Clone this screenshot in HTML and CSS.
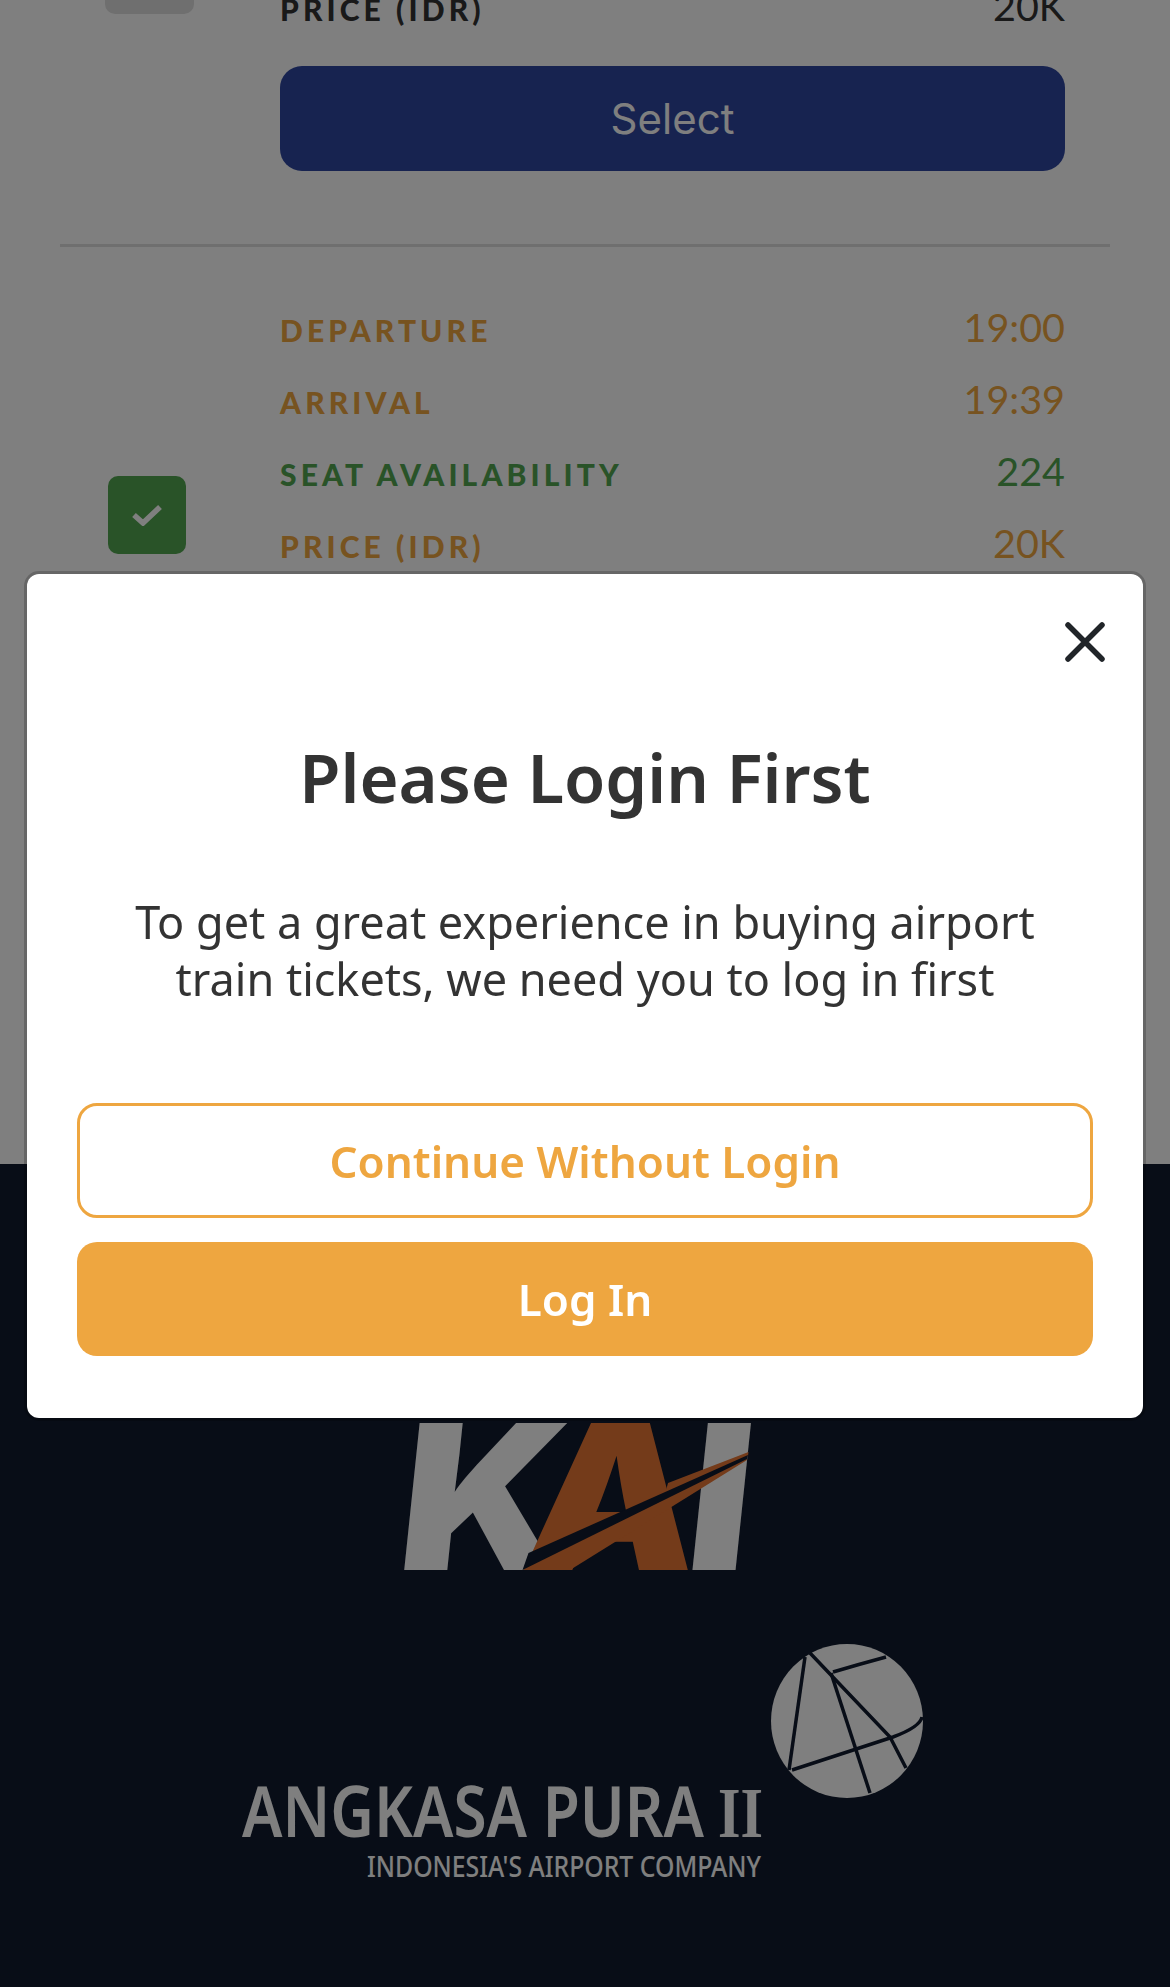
FILE: index.html
```html
<!DOCTYPE html>
<html lang="en">
<head>
  <meta charset="UTF-8">
  <meta name="viewport" content="width=device-width, initial-scale=1.0">
  <title>Airport Train Schedule</title>
  <link rel="stylesheet" href="styles.css">
</head>
<body>

<div class="page">
  <div class="schedule">

    <div class="train">
      <div class="check-col check-col-top"><div class="check check-off"></div></div>
      <div class="info">
        <div class="row row-dark"><span class="label">PRICE (IDR)</span><span class="value">20K</span></div>
        <button class="select">Select</button>
      </div>
    </div>

    <div class="train">
      <div class="check-col">
        <div class="check check-on">
          <svg width="30" height="22" viewBox="0 0 30 22"><path d="M2 11 L11 19 L28 3" fill="none" stroke="#fff" stroke-width="5.5"/></svg>
        </div>
      </div>
      <div class="info">
        <div class="row row-orange"><span class="label">DEPARTURE</span><span class="value">19:00</span></div>
        <div class="row row-orange"><span class="label">ARRIVAL</span><span class="value">19:39</span></div>
        <div class="row row-green"><span class="label">SEAT AVAILABILITY</span><span class="value">224</span></div>
        <div class="row row-orange"><span class="label">PRICE (IDR)</span><span class="value">20K</span></div>
        <button class="select">Select</button>
      </div>
    </div>

  </div>

  <footer class="footer">
    <svg class="logo-kai" width="360" height="160" viewBox="0 0 360 160">
      <g transform="translate(-8 152) skewX(-6) scale(1.08 1)">
        <text class="kai-word"><tspan class="kai-grey" x="0">K</tspan><tspan class="kai-brown" x="116">A</tspan><tspan class="kai-grey" x="267">I</tspan></text>
      </g>
      <polygon points="120.5,152 168,152 345,42 345,37" fill="#e87634"/>
      <polygon points="266,65 346.5,34 346,38 262,80" fill="#e87634"/>
      <polygon points="126.5,135 346,37 345,41 120.5,152" fill="#101a2e"/>
    </svg>

    <svg class="logo-ap" width="700" height="250" viewBox="0 0 700 250">
      <ellipse cx="617" cy="81" rx="76" ry="77" fill="#fff"/>
      <g fill="none" stroke="#101a2e" stroke-width="3.5">
        <path d="M575 17 L559 130"/>
        <path d="M580 13 L660 97 L676 128"/>
        <path d="M601 33 L640 153"/>
        <path d="M603 32 Q630 24 656 17"/>
        <path d="M562 130 L663 97 Q690 87 692 77"/>
      </g>
      <text class="ap-name" x="12" y="197" textLength="462" lengthAdjust="spacingAndGlyphs">ANGKASA PURA</text>
      <text class="ap-num" x="488" y="197" textLength="45" lengthAdjust="spacingAndGlyphs">II</text>
      <text class="ap-tag" x="137" y="237" textLength="394" lengthAdjust="spacingAndGlyphs">INDONESIA'S AIRPORT COMPANY</text>
    </svg>
  </footer>
</div>

<div class="overlay">
  <div class="modal">
    <div class="modal-top">
      <svg class="close" width="40" height="40" viewBox="0 0 40 40"><path d="M3 3 L37 37 M37 3 L3 37" stroke="#212529" stroke-width="5.5" stroke-linecap="round"/></svg>
    </div>
    <h2 class="modal-title">Please Login First</h2>
    <p class="modal-text">To get a great experience in buying airport<br>train tickets, we need you to log in first</p>
    <button class="btn btn-outline">Continue Without Login</button>
    <button class="btn btn-fill">Log In</button>
  </div>
</div>

</body>
</html>
```

FILE: styles.css
```css
html, body { margin: 0; height: 1987px; overflow: hidden; }
body { font-family: "Lato", sans-serif; background: #fff; }

.page { display: flex; flex-direction: column; height: 1987px; }
.schedule { height: 1164px; overflow: hidden; padding: 0 60px; box-sizing: border-box; }

.train { display: flex; align-items: center; padding-bottom: 73px; margin-bottom: 43px; border-bottom: 3px solid #dedede; }
.train:first-child { margin-top: -31px; }
.check-col { width: 220px; flex: none; }
.check-col-top { align-self: flex-start; }
.check { display: flex; align-items: center; justify-content: center; border-radius: 10px; }
.check-off { width: 89px; height: 89px; margin-left: 45px; margin-top: -44px; background: #dedede; }
.check-on { width: 78px; height: 78px; margin-left: 48px; margin-top: 32px; background: #53a651; }
.info { flex: 1; margin-right: 45px; }

.row { display: flex; justify-content: space-between; align-items: center; height: 72px; }
.label { font-size: 30px; font-weight: 900; letter-spacing: 4.1px; padding-top: 8px; }
.value { font-size: 39.5px; }
.row-dark { color: #333; }
.row-orange { color: #eea640; }
.row-green { color: #53a651; }

.select { display: block; width: 100%; height: 105px; margin-top: 25px; border: 0; border-radius: 22px; background: #2e46a0; color: #fff; font-family: "Inter", sans-serif; font-size: 42px; }

.footer { flex: 1; background: #101a2e; display: flex; flex-direction: column; align-items: center; padding-top: 254px; box-sizing: border-box; }
.logo-kai { display: block; margin-left: -7px; }
.logo-ap { display: block; margin-top: 62px; margin-left: -10px; }
.kai-word { font-family: "Inter", sans-serif; font-weight: 900; font-size: 202px; }
.kai-grey { fill: #fff; }
.kai-brown { fill: #e87634; }
.ap-name { font-family: "Noto Sans", sans-serif; font-weight: 600; font-size: 70px; fill: #fff; }
.ap-num { font-family: "Liberation Serif", serif; font-weight: 700; font-size: 72px; fill: #fff; }
.ap-tag { font-family: "Noto Sans", sans-serif; font-weight: 500; font-size: 28px; fill: #fff; }

.overlay { position: fixed; top: 0; left: 0; right: 0; bottom: 0; background: rgba(0, 0, 0, 0.5); display: flex; justify-content: center; align-items: flex-start; padding-top: 571px; box-sizing: border-box; }
.modal { width: 1122px; box-sizing: border-box; background: #fff; background-clip: padding-box; border: 3px solid rgba(0, 0, 0, 0.2); border-radius: 15px; padding: 48px 50px 62px; font-family: "Noto Sans", sans-serif; color: #333; text-align: center; }
.modal-top { display: flex; justify-content: flex-end; }
.close { margin-right: -12px; }
.modal-title { margin: 71px 0 0; font-size: 67px; line-height: 88px; font-weight: 600; }
.modal-text { margin: 72px 0 0; font-size: 45px; line-height: 57px; }
.btn { display: block; width: 100%; height: 114px; border-radius: 20px; font-family: "Noto Sans", sans-serif; font-size: 44px; font-weight: 600; box-sizing: border-box; }
.btn-outline { margin-top: 96px; height: 115px; background: #fff; border: 3px solid #eea640; color: #eea640; }
.btn-fill { margin-top: 24px; background: #eea640; border: 0; color: #fff; }
```
